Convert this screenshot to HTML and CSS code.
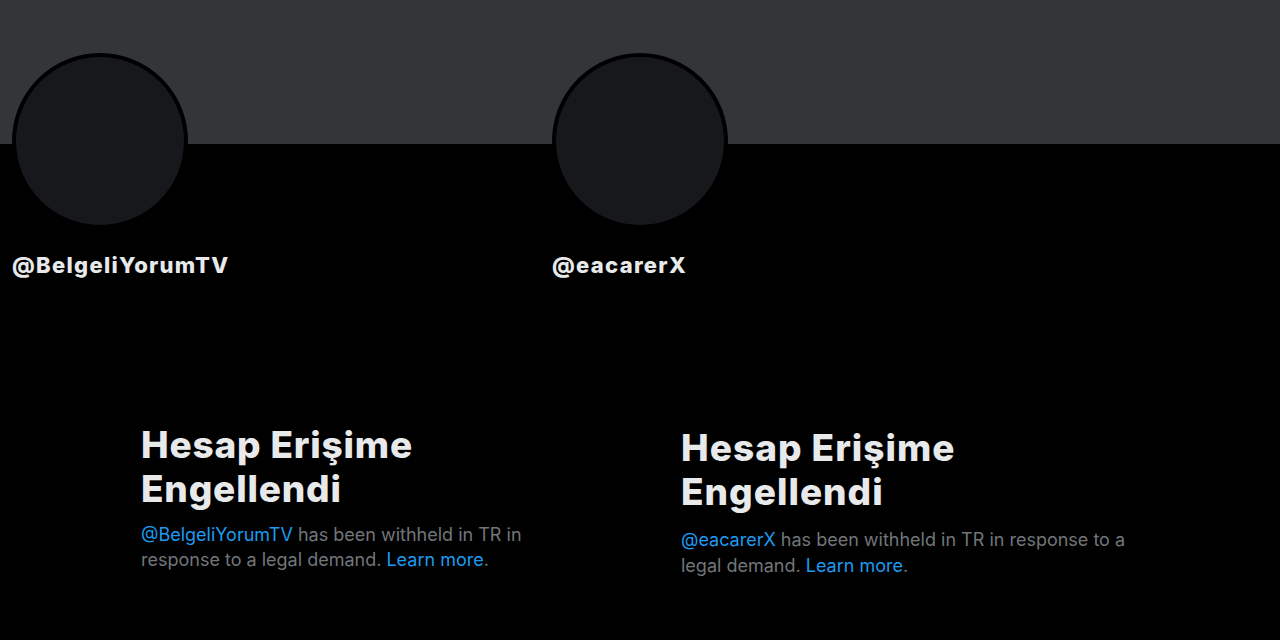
FILE: index.html
```html
<!DOCTYPE html>
<html lang="tr">
<head>
  <meta charset="UTF-8" />
  <meta name="viewport" content="width=device-width, initial-scale=1.0"/>
  <title>Hesap Erişime Engellendi</title>
  <link rel="stylesheet" href="styles.css">
</head>
<body>

<div class="profiles">
  <!-- left profile -->
  <section class="profile profile-left">
    <div class="banner"></div>
    <div class="avatar"></div>
    <div class="handle">@BelgeliYorumTV</div>
    <div class="withheld">
      <h2>Hesap Erişime Engellendi</h2>
      <p><a href="#">@BelgeliYorumTV</a> has been withheld in TR in response to a legal demand. <a href="#">Learn more</a>.</p>
    </div>
  </section>

  <!-- right profile -->
  <section class="profile profile-right">
    <div class="banner"></div>
    <div class="avatar"></div>
    <div class="handle">@eacarerX</div>
    <div class="withheld">
      <h2>Hesap Erişime Engellendi</h2>
      <p><a href="#">@eacarerX</a> has been withheld in TR in response to a legal demand. <a href="#">Learn more</a>.</p>
    </div>
  </section>
</div>

</body>
</html>
```

FILE: styles.css
```css
* {
  box-sizing: border-box;
  margin: 0;
  padding: 0;
}

body {
  background-color: #000;
  color: #e7e9ea;
  font-family: Inter, "Liberation Sans", Arial, sans-serif;
  height: 640px;
  overflow: hidden;
}

.profiles {
  display: flex;
}

.profile {
  display: flex;
  flex-direction: column;
}

.profile-left {
  width: 540px;
}

.profile-right {
  flex: 1;
}

.banner {
  height: 144px;
  background-color: #333639;
}

.avatar {
  width: 176px;
  height: 176px;
  margin-top: -91px;
  margin-left: 12px;
  border-radius: 50%;
  background-color: #16181c;
  border: 4px solid #000;
}

.handle {
  margin-top: 23px;
  margin-left: 12px;
  font-size: 22px;
  line-height: 26px;
  font-weight: 800;
  letter-spacing: 1.3px;
}

.withheld {
  padding-left: 141px;
  margin-top: 145px;
}

.withheld h2 {
  font-size: 37px;
  line-height: 44px;
  font-weight: 800;
  letter-spacing: 0.8px;
}

.withheld p {
  margin-top: 11px;
  color: #71767b;
  font-size: 18px;
  line-height: 25px;
}

.withheld a {
  color: #1d9bf0;
  text-decoration: none;
}

.profile-left .withheld {
  width: 530px;
}

.profile-left .withheld h2 {
  width: 340px;
}

/* right screenshot is a little bigger */
.profile-right .withheld {
  margin-top: 148px;
  width: 600px;
}

.profile-right .withheld h2 {
  width: 340px;
  letter-spacing: 1px;
}

.profile-right .withheld p {
  line-height: 26px;
  margin-top: 13px;
}
```
